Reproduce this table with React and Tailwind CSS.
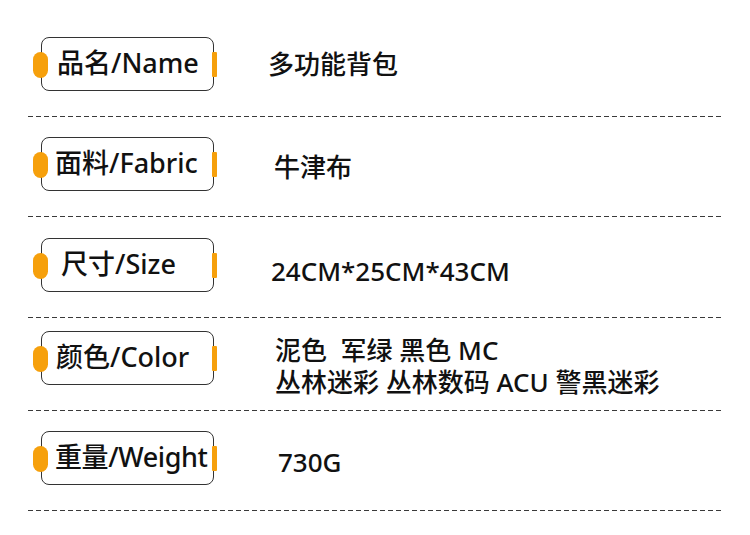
import React from "react";

const rows = [
  { label: "品名/Name", pl: "pl-[15px]", pt: "pt-[37px]", value: ["多功能背包"], ml: "ml-[54px]", mt: "mt-[11px]" },
  { label: "面料/Fabric", pl: "pl-[13px]", pt: "pt-[20px]", value: ["牛津布"], ml: "ml-[60px]", mt: "mt-[14px]" },
  { label: "尺寸/Size", pl: "pl-[19px]", pt: "pt-[21px]", value: ["24CM*25CM*43CM"], ml: "ml-[57px]", mt: "mt-[17px]" },
  {
    label: "颜色/Color",
    pl: "pl-[14px]",
    pt: "pt-[13px]",
    value: ["泥色\u00a0\u00a0军绿 黑色 MC", "丛林迷彩 丛林数码 ACU 警黑迷彩"],
    ml: "ml-[61px]",
    mt: "mt-[3px]",
  },
  { label: "重量/Weight", pl: "pl-[13px] tracking-[-0.4px]", pt: "pt-[20px]", value: ["730G"], ml: "ml-[64px]", mt: "mt-[15px]" },
];

const Divider = () => (
  <div className="ml-[28px] mr-[28px] h-px bg-[repeating-linear-gradient(90deg,#3a3a3a_0_5px,transparent_5px_8px)]" />
);

const Label = ({ text, pl }) => (
  <div
    className={`relative w-[173px] h-[54px] shrink-0 rounded-[8px] border border-[#333] bg-white flex items-center ${pl}`}
  >
    <span className="absolute left-[-9px] top-[14px] w-[15px] h-[26px] rounded-full bg-[#f6a00c]" />
    <span className="absolute right-[-4px] top-[14px] w-[5px] h-[25px] rounded-[1px] bg-[#f6a00c]" />
    <span className="text-[27px] leading-none text-[#111] whitespace-nowrap -translate-y-[2px]">{text}</span>
  </div>
);

export default function App() {
  return (
    <div
      className="w-[750px] h-[535px] bg-white overflow-hidden font-medium"
      style={{ fontFamily: '"Noto Sans", "Noto Sans CJK SC", sans-serif' }}
    >
      {rows.map((r) => (
        <div key={r.label}>
          <div className={`flex items-start pl-[41px] pb-[25px] ${r.pt}`}>
            <Label text={r.label} pl={r.pl} />
            <div className={`${r.ml} h-[54px] text-[26px] leading-[32px] text-[#111] whitespace-nowrap`}>
              <div className={r.mt}>
                {r.value.map((v) => (
                  <div key={v}>{v}</div>
                ))}
              </div>
            </div>
          </div>
          <Divider />
        </div>
      ))}
    </div>
  );
}
